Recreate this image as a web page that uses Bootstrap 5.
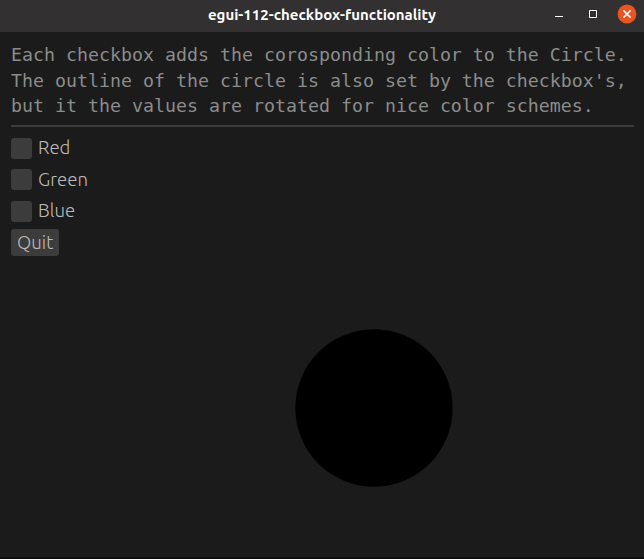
<!DOCTYPE html>
<html lang="en">
<head>
<meta charset="utf-8">
<title>egui-112-checkbox-functionality</title>
<link href="https://cdn.jsdelivr.net/npm/bootstrap@5.3.0/dist/css/bootstrap.min.css" rel="stylesheet">
<style>
body { background: #1b1b1b; color: #b4b4b4; font-family: Ubuntu, "Noto Sans", sans-serif; height: 559px; overflow: hidden; border-bottom: 2px solid #100d0f; }
.titlebar { height: 32px; background: #323030; display: grid; grid-template-columns: 1fr auto 1fr; flex: none; }
.titlebar h1 { font-size: 15px; font-weight: 700; color: #fff; line-height: 30px; }
.win-controls { padding-right: 7px; gap: 14px; }
.win-controls button { width: 20px; height: 20px; margin-top: 4px; }
.client { padding: 10px 10px 0 11px; }
.intro { font: 18.27px/25.5px "DejaVu Sans Mono", monospace; color: #8c8c8c; white-space: pre; }
.rule { height: 2px; margin: 6px 0 0 0; background: #3b3b3b; }
.options { margin-top: 11px; gap: 10.5px; }
.option { height: 21px; line-height: 19px; font-size: 18.6px; font-weight: 300; gap: 6px; color: #bababa; }
.option:nth-child(2) { line-height: 21.5px; }
.option .form-check-input { width: 21px; height: 21px; background-color: #3c3c3c; border-radius: 3px; }
.quit { width: 48.4px; height: 27px; margin-top: 7.5px; background: #3c3c3c; color: #bababa; border-radius: 3px; font-size: 18.5px; font-weight: 300; line-height: 25px; padding-bottom: 1px !important; }
.disc { width: 158px; height: 158px; margin: 73px 0 0 284px; }
</style>
</head>
<body class="d-flex flex-column">
<header class="titlebar">
  <span></span>
  <h1 class="m-0">egui-112-checkbox-functionality</h1>
  <div class="win-controls d-flex justify-content-end">
    <button class="btn p-0 border-0 d-flex" aria-label="Minimize"><svg width="20" height="20"><path d="M6 12.5h8" stroke="#fff"/></svg></button>
    <button class="btn p-0 border-0 d-flex" aria-label="Maximize"><svg width="20" height="20"><path d="M6.5 6.5h7v7h-7z" fill="none" stroke="#fff"/></svg></button>
    <button class="btn p-0 border-0 d-flex" aria-label="Close"><svg width="20" height="20"><circle cx="10" cy="10" r="9.4" fill="#e95420"/><path d="M6.4 6.4l7.2 7.2M13.6 6.4l-7.2 7.2" stroke="#fff" stroke-width="1.5"/></svg></button>
  </div>
</header>
<main class="client">
  <p class="intro m-0">Each checkbox adds the corosponding color to the Circle.
The outline of the circle is also set by the checkbox's,
but it the values are rotated for nice color schemes.</p>
  <div class="rule"></div>
  <div class="options d-flex flex-column align-items-start">
    <label class="option d-flex"><input class="form-check-input m-0 border-0" type="checkbox"><span>Red</span></label>
    <label class="option d-flex"><input class="form-check-input m-0 border-0" type="checkbox"><span>Green</span></label>
    <label class="option d-flex"><input class="form-check-input m-0 border-0" type="checkbox"><span>Blue</span></label>
  </div>
  <button class="quit btn d-block p-0 border-0">Quit</button>
  <svg class="disc d-block" viewBox="0 0 158 158"><circle cx="79" cy="79" r="78.7" fill="#000"/></svg>
</main>
<script src="https://cdn.jsdelivr.net/npm/bootstrap@5.3.0/dist/js/bootstrap.bundle.min.js"></script>
</body>
</html>
